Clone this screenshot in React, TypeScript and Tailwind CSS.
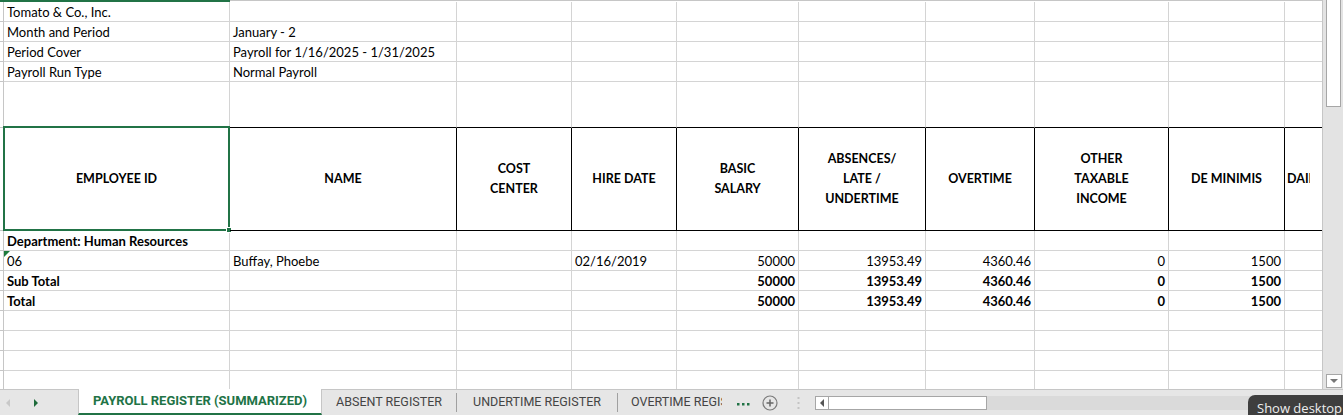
import React from 'react';

type Cell = { text?: string; bold?: boolean; align?: 'left' | 'right' };

const widths = [4, 226, 227, 115, 105, 122, 127, 109, 134, 116, 120];

const GRID = 'border-[#d4d4d4]';

function Row({ cells, height = 'h-[20px]' }: { cells: Cell[]; height?: string }) {
  return (
    <div className={`flex ${height}`}>
      {widths.map((w, i) => {
        const c = cells[i - 1];
        if (i === 0) {
          return <div key={i} style={{ width: w }} className="shrink-0 border-r border-b border-[#c6c6c6]" />;
        }
        return (
          <div
            key={i}
            style={{ width: w }}
            className={`shrink-0 border-r border-b ${GRID} flex items-end whitespace-nowrap overflow-visible leading-[17px] ${
              c?.align === 'right' ? 'justify-end pr-[3px]' : 'pl-[3px]'
            } ${c?.bold ? 'font-bold' : ''}`}
          >
            {c?.text}
          </div>
        );
      })}
    </div>
  );
}

const headers = [
  ['EMPLOYEE ID'],
  ['NAME'],
  ['COST', 'CENTER'],
  ['HIRE DATE'],
  ['BASIC', 'SALARY'],
  ['ABSENCES/', 'LATE /', 'UNDERTIME'],
  ['OVERTIME'],
  ['OTHER', 'TAXABLE', 'INCOME'],
  ['DE MINIMIS'],
  ['DAILY RATE'],
];

function HeaderRow() {
  return (
    <div className="flex h-[103px]">
      <div style={{ width: 4 }} className="shrink-0 border-r border-b border-[#c6c6c6]" />
      {headers.map((lines, i) => (
        <div
          key={i}
          style={{ width: widths[i + 1] }}
          className={`relative shrink-0 border-r border-b border-black flex flex-col justify-center font-bold text-[12.5px] leading-[20px] whitespace-nowrap ${
            i === 9 ? 'items-start pl-[2px]' : 'items-center'
          }`}
        >
          {i === 9 ? (
            <span className="block w-[23px] overflow-hidden">{lines[0]}</span>
          ) : (
            lines.map((l) => <span key={l}>{l}</span>)
          )}
          {i === 0 && (
            <>
              <div className="absolute -left-[1px] -top-[2px] -right-[1px] -bottom-[1px] border-2 border-[#217346]" />
              <div className="absolute -right-[3px] -bottom-[3px] w-[6px] h-[6px] bg-[#217346] border border-white" />
            </>
          )}
        </div>
      ))}
    </div>
  );
}

function Row5() {
  return (
    <div className="flex h-[46px]">
      {widths.map((w, i) => (
        <div
          key={i}
          style={{ width: w }}
          className={`shrink-0 border-r ${
            i === 0 ? 'border-b border-[#c6c6c6]' : i === 1 ? `${GRID}` : `${GRID} border-b-black border-b`
          }`}
        />
      ))}
    </div>
  );
}

function Tri({ dir, color }: { dir: 'left' | 'right' | 'down'; color: string }) {
  const pts = dir === 'left' ? '4,0 4,8 0,4' : dir === 'right' ? '0,0 0,8 4,4' : '0,0 8,0 4,4';
  const w = dir === 'down' ? 8 : 4;
  const h = dir === 'down' ? 4 : 8;
  return (
    <svg width={w} height={h} viewBox={`0 0 ${w} ${h}`}>
      <polygon points={pts} fill={color} />
    </svg>
  );
}

export default function App() {
  const num = (t: string, bold = false): Cell => ({ text: t, align: 'right', bold });
  return (
    <div
      className="relative w-[1343px] h-[415px] overflow-hidden bg-white text-black text-[13px]"
      style={{ fontFamily: 'Lato, "Liberation Sans", sans-serif' }}
    >
      <div className="flex h-[389px]">
        {/* sheet */}
        <div className="w-[1322px] h-[389px] overflow-hidden relative">
          <div className="flex h-[2px]">
            <div className="w-[230px] h-[2px] bg-[#217346]" />
            <div className="flex-1 h-[1px] bg-[#c6c6c6]" />
          </div>
          <Row cells={[{ text: 'Tomato & Co., Inc.' }]} />
          <Row cells={[{ text: 'Month and Period' }, { text: 'January - 2' }]} />
          <Row cells={[{ text: 'Period Cover' }, { text: 'Payroll for 1/16/2025 - 1/31/2025' }]} />
          <Row cells={[{ text: 'Payroll Run Type' }, { text: 'Normal Payroll' }]} />
          <Row5 />
          <HeaderRow />
          <Row cells={[{ text: 'Department: Human Resources', bold: true }]} />
          <div className="relative">
            <Row
              cells={[
                { text: '06' },
                { text: 'Buffay, Phoebe' },
                {},
                { text: '02/16/2019' },
                num('50000'),
                num('13953.49'),
                num('4360.46'),
                num('0'),
                num('1500'),
              ]}
            />
            <svg className="absolute left-[4px] top-0" width="6" height="6" viewBox="0 0 6 6">
              <polygon points="0,0 6,0 0,6" fill="#1e7a3c" />
            </svg>
          </div>
          <Row
            cells={[
              { text: 'Sub Total', bold: true },
              {},
              {},
              {},
              num('50000', true),
              num('13953.49', true),
              num('4360.46', true),
              num('0', true),
              num('1500', true),
            ]}
          />
          <Row
            cells={[
              { text: 'Total', bold: true },
              {},
              {},
              {},
              num('50000', true),
              num('13953.49', true),
              num('4360.46', true),
              num('0', true),
              num('1500', true),
            ]}
          />
          <Row cells={[]} />
          <Row cells={[]} />
          <Row cells={[]} />
          <Row cells={[]} />
        </div>
        {/* vertical scrollbar */}
        <div className="w-[21px] h-[389px] bg-[#e3e3e3] flex flex-col border-l border-[#c6c6c6]">
          <div className="ml-[3px] w-[15px] h-[107px] bg-white border border-[#a6a6a6] border-t-0" />
          <div className="flex-1" />
          <div className="ml-[3px] mb-[1px] w-[16px] h-[14px] bg-white border border-[#a6a6a6] flex items-center justify-center">
            <Tri dir="down" color="#777" />
          </div>
        </div>
      </div>

      {/* tab bar */}
      <div
        className="flex items-stretch h-[26px] bg-[#e6e6e6] border-t border-[#c6c6c6] text-[12px] text-[#444]"
        style={{ fontFamily: 'Roboto, "Open Sans", sans-serif' }}
      >
        <div className="w-[78px] shrink-0 flex items-center">
          <div className="ml-[6px] flex items-center">
            <Tri dir="left" color="#c8c8c8" />
          </div>
          <div className="ml-[24px] flex items-center">
            <Tri dir="right" color="#1e6b3a" />
          </div>
        </div>
        <div className="w-[244px] shrink-0 -mt-[1px] bg-white border-l border-r border-[#c6c6c6] border-b-2 border-b-[#217346] flex items-center justify-center font-bold text-[#217346] text-[13px]">
          PAYROLL REGISTER (SUMMARIZED)
        </div>
        <div className="w-[134px] shrink-0 flex items-center justify-center text-[12.5px]">ABSENT REGISTER</div>
        <div className="w-[1px] shrink-0 my-[3px] bg-[#a0a0a0]" />
        <div className="w-[160px] shrink-0 flex items-center justify-center text-[12.5px]">UNDERTIME REGISTER</div>
        <div className="w-[1px] shrink-0 my-[3px] bg-[#a0a0a0]" />
        <div className="w-[106px] shrink-0 pl-[13px] flex items-center overflow-hidden whitespace-nowrap text-[12.5px]">
          <span className="block w-[91px] overflow-hidden">OVERTIME REGISTER</span>
        </div>
        <div className="w-[91px] shrink-0 flex items-center">
          <svg className="ml-[13px] mt-[3px]" width="13" height="3" viewBox="0 0 13 3">
            <rect x="0" y="0" width="2.5" height="2.5" fill="#217346" />
            <rect x="5" y="0" width="2.5" height="2.5" fill="#217346" />
            <rect x="10" y="0" width="2.5" height="2.5" fill="#217346" />
          </svg>
          <svg className="ml-[12px]" width="16" height="16" viewBox="0 0 16 16">
            <circle cx="8" cy="8" r="7" fill="none" stroke="#7a7a7a" strokeWidth="1.2" />
            <path d="M8 4.5v7M4.5 8h7" stroke="#666" strokeWidth="1.5" />
          </svg>
          <svg className="ml-[19px]" width="3" height="14" viewBox="0 0 3 14">
            <rect x="0.5" y="1" width="2" height="2" fill="#c4c4c4" />
            <rect x="0.5" y="6" width="2" height="2" fill="#c4c4c4" />
            <rect x="0.5" y="11" width="2" height="2" fill="#c4c4c4" />
          </svg>
        </div>
        <div className="flex-1 flex items-center">
          <div className="h-[14px] flex-1 flex bg-[#dadada]">
            <div className="w-[14px] h-[14px] bg-white border border-[#a6a6a6] flex items-center justify-center">
              <Tri dir="left" color="#555" />
            </div>
            <div className="w-[158px] h-[14px] bg-white border border-[#a6a6a6] border-l-0" />
          </div>
        </div>
      </div>

      {/* tooltip */}
      <div
        className="absolute right-0 bottom-0 w-[95px] h-[20px] bg-[#363636]/95 rounded-tl-[7px] overflow-hidden pl-[9px] pt-[5px] text-[13px] leading-[16px] text-[#eeeeee] whitespace-nowrap"
        style={{ fontFamily: '"Open Sans", Roboto, sans-serif' }}
      >
        Show desktop
      </div>
    </div>
  );
}
